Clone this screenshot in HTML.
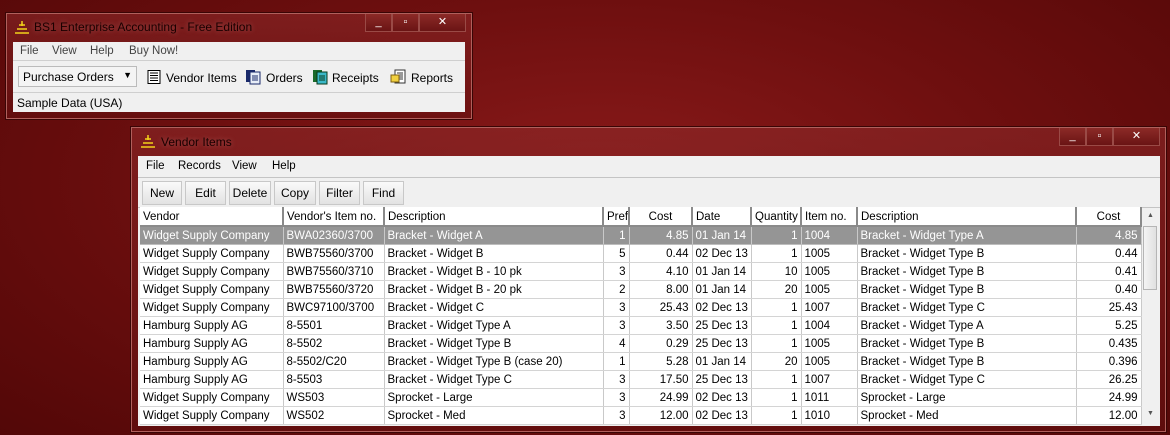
<!DOCTYPE html>
<html><head><meta charset="utf-8"><style>
*{margin:0;padding:0;box-sizing:border-box}
body{width:1170px;height:435px;overflow:hidden;position:relative;font-family:"Liberation Sans",sans-serif;font-size:11.5px;color:#000;
background:radial-gradient(ellipse 900px 400px at 600px 180px,#8a1a1a 0%,#6e0f0f 45%,#4e0606 100%);}
.win{position:absolute;border:1px solid #b0605c;background:linear-gradient(180deg,rgba(140,40,40,.6),rgba(100,15,15,.6));box-shadow:0 0 0 1px #3a0505;}
.title{position:absolute;color:#1a0000;font-size:12px;text-shadow:0 0 6px rgba(255,200,200,.35)}
.logo{position:absolute;width:16px;height:14px}
.ctl{position:absolute;top:0;height:18px;border:1px solid #9a4a46;border-top:none;background:linear-gradient(#8c2a27,#6a1414);color:#fff;font-size:11px;text-align:center;line-height:16px}
.client{position:absolute;background:#f0f0f0}
.menu span{position:absolute;top:3px}
.btn{position:absolute;top:2px;height:24px;border:1px solid #c8c8c8;background:linear-gradient(#fafafa,#e2e2e2);text-align:center;line-height:22px;font-size:12px}
table{position:absolute;border-collapse:collapse;table-layout:fixed;background:#fff}
td{height:18px;border-right:1px solid #c9c9c9;border-bottom:1px solid #d4d4d4;padding:0 3px;white-space:nowrap;overflow:hidden;font-size:11.5px;padding-top:1px}
th{height:19px;font-weight:normal;text-align:left;padding:2px 3px 0;border-right:2px solid #8a8a8a;border-bottom:2px solid #8a8a8a;background:#fff;white-space:nowrap;overflow:hidden;font-size:11.5px}
td.r,th.r{text-align:right}
tr.sel td{background:#959595;color:#fff;border-bottom-color:#bdbdbd}
</style></head><body>

<div class="win" style="left:6px;top:13px;width:466px;height:106px">
 <svg class="logo" style="left:7px;top:7px" viewBox="0 0 16 14"><path d="M7 1h2M5 4h6M8 2v3M3 8h10M1 12h14" stroke="#f2d21a" stroke-width="1.6" fill="none"/></svg>
 <div class="title" style="left:27px;top:6px">BS1 Enterprise Accounting - Free Edition</div>
 <div class="ctl" style="left:358px;width:27px">_</div>
 <div class="ctl" style="left:385px;width:27px">▫</div>
 <div class="ctl" style="left:412px;width:47px">✕</div>
 <div class="client" style="left:6px;top:28px;width:452px;height:70px">
  <div class="menu" style="position:absolute;left:0;top:0;width:452px;height:19px;border-bottom:1px solid #cfcfcf;color:#444">
   <span style="left:7px">File</span><span style="left:39px">View</span><span style="left:77px">Help</span><span style="left:116px">Buy Now!</span></div>
  <div style="position:absolute;left:5px;top:24px;width:119px;height:21px;border:1px solid #bbb;background:#f4f4f4;padding:3px 4px;font-size:12px">Purchase Orders<span style="position:absolute;right:4px;top:3px;font-size:9px">▼</span></div>
  <div style="position:absolute;left:0;top:50px;width:452px;border-top:1px solid #cfcfcf"></div>
  <svg style="position:absolute;left:134px;top:28px" width="14" height="14"><rect x="1" y="0.5" width="12" height="13" fill="#fff" stroke="#000"/><path d="M3 3h8M3 5.5h8M3 8h8M3 10.5h8" stroke="#000"/></svg>
  <span style="position:absolute;left:153px;top:29px;font-size:12px">Vendor Items</span>
  <svg style="position:absolute;left:232px;top:27px" width="16" height="16"><rect x="1" y="1" width="9" height="12" fill="#1a2a6a"/><rect x="5" y="3" width="10" height="12" fill="#e8eef8" stroke="#1a2a6a"/><path d="M7 7h6M7 9h6M7 11h6" stroke="#1a2a6a"/></svg>
  <span style="position:absolute;left:253px;top:29px;font-size:12px">Orders</span>
  <svg style="position:absolute;left:299px;top:27px" width="16" height="16"><rect x="1" y="1" width="9" height="12" fill="#1b6a2a"/><rect x="5" y="3" width="10" height="12" fill="#3bb8c8" stroke="#0a3a1a"/><path d="M7 7h6M7 9h6M7 11h6" stroke="#0a3a1a"/></svg>
  <span style="position:absolute;left:319px;top:29px;font-size:12px">Receipts</span>
  <svg style="position:absolute;left:377px;top:27px" width="17" height="16"><rect x="5" y="1" width="10" height="13" fill="#fff" stroke="#333"/><path d="M7 4h6M7 6h6M7 8h6M7 10h6" stroke="#333"/><rect x="1" y="6" width="8" height="7" fill="#f0d040" stroke="#806010"/></svg>
  <span style="position:absolute;left:398px;top:29px;font-size:12px">Reports</span>
  <span style="position:absolute;left:4px;top:54px;font-size:12px">Sample Data (USA)</span>
 </div>
</div>

<div class="win" style="left:131px;top:127px;width:1035px;height:305px">
 <svg class="logo" style="left:8px;top:7px" viewBox="0 0 16 14"><path d="M7 1h2M5 4h6M8 2v3M3 8h10M1 12h14" stroke="#f2d21a" stroke-width="1.6" fill="none"/></svg>
 <div class="title" style="left:29px;top:7px">Vendor Items</div>
 <div class="ctl" style="left:927px;width:27px">_</div>
 <div class="ctl" style="left:954px;width:27px">▫</div>
 <div class="ctl" style="left:981px;width:47px">✕</div>
 <div class="client" style="left:6px;top:28px;width:1022px;height:270px">
  <div class="menu" style="position:absolute;left:0;top:0;width:1022px;height:22px;border-bottom:1px solid #c4c4c4">
   <span style="left:8px;top:4px">File</span><span style="left:40px;top:4px">Records</span><span style="left:94px;top:4px">View</span><span style="left:134px;top:4px">Help</span></div>
  <div class="btn" style="left:4px;top:25px;width:40px">New</div>
  <div class="btn" style="left:47px;top:25px;width:41px">Edit</div>
  <div class="btn" style="left:91px;top:25px;width:42px">Delete</div>
  <div class="btn" style="left:136px;top:25px;width:42px">Copy</div>
  <div class="btn" style="left:181px;top:25px;width:41px">Filter</div>
  <div class="btn" style="left:225px;top:25px;width:41px">Find</div>
  <div style="position:absolute;left:0;top:51px;width:1022px;border-top:1px solid #c4c4c4"></div>
  <div style="position:absolute;left:1004px;top:52px;width:17px;height:217px;background:#f0f0f0">
   <div style="position:absolute;top:4px;left:5px;font-size:7px;color:#555">▲</div>
   <div style="position:absolute;top:18px;left:1px;width:14px;height:64px;border:1px solid #b5b5b5;background:linear-gradient(90deg,#f4f4f4,#e0e0e0)"></div>
   <div style="position:absolute;top:202px;left:5px;font-size:7px;color:#555">▼</div>
  </div>
 </div>
</div>

<table style="left:140px;top:207px;width:1001px">
<colgroup><col style="width:143px"><col style="width:101px"><col style="width:219px"><col style="width:26px"><col style="width:63px"><col style="width:59px"><col style="width:50px"><col style="width:56px"><col style="width:219px"><col style="width:65px"></colgroup>
<tr><th>Vendor</th><th>Vendor's Item no.</th><th>Description</th><th>Pref</th><th style="text-align:center">Cost</th><th>Date</th><th>Quantity</th><th>Item no.</th><th>Description</th><th style="text-align:center">Cost</th></tr>
<tr class="sel"><td>Widget Supply Company</td><td>BWA02360/3700</td><td>Bracket - Widget A</td><td class="r">1</td><td class="r">4.85</td><td>01 Jan 14</td><td class="r">1</td><td>1004</td><td>Bracket - Widget Type A</td><td class="r">4.85</td></tr>
<tr><td>Widget Supply Company</td><td>BWB75560/3700</td><td>Bracket - Widget B</td><td class="r">5</td><td class="r">0.44</td><td>02 Dec 13</td><td class="r">1</td><td>1005</td><td>Bracket - Widget Type B</td><td class="r">0.44</td></tr>
<tr><td>Widget Supply Company</td><td>BWB75560/3710</td><td>Bracket - Widget B - 10 pk</td><td class="r">3</td><td class="r">4.10</td><td>01 Jan 14</td><td class="r">10</td><td>1005</td><td>Bracket - Widget Type B</td><td class="r">0.41</td></tr>
<tr><td>Widget Supply Company</td><td>BWB75560/3720</td><td>Bracket - Widget B - 20 pk</td><td class="r">2</td><td class="r">8.00</td><td>01 Jan 14</td><td class="r">20</td><td>1005</td><td>Bracket - Widget Type B</td><td class="r">0.40</td></tr>
<tr><td>Widget Supply Company</td><td>BWC97100/3700</td><td>Bracket - Widget C</td><td class="r">3</td><td class="r">25.43</td><td>02 Dec 13</td><td class="r">1</td><td>1007</td><td>Bracket - Widget Type C</td><td class="r">25.43</td></tr>
<tr><td>Hamburg Supply AG</td><td>8-5501</td><td>Bracket - Widget Type A</td><td class="r">3</td><td class="r">3.50</td><td>25 Dec 13</td><td class="r">1</td><td>1004</td><td>Bracket - Widget Type A</td><td class="r">5.25</td></tr>
<tr><td>Hamburg Supply AG</td><td>8-5502</td><td>Bracket - Widget Type B</td><td class="r">4</td><td class="r">0.29</td><td>25 Dec 13</td><td class="r">1</td><td>1005</td><td>Bracket - Widget Type B</td><td class="r">0.435</td></tr>
<tr><td>Hamburg Supply AG</td><td>8-5502/C20</td><td>Bracket - Widget Type B (case 20)</td><td class="r">1</td><td class="r">5.28</td><td>01 Jan 14</td><td class="r">20</td><td>1005</td><td>Bracket - Widget Type B</td><td class="r">0.396</td></tr>
<tr><td>Hamburg Supply AG</td><td>8-5503</td><td>Bracket - Widget Type C</td><td class="r">3</td><td class="r">17.50</td><td>25 Dec 13</td><td class="r">1</td><td>1007</td><td>Bracket - Widget Type C</td><td class="r">26.25</td></tr>
<tr><td>Widget Supply Company</td><td>WS503</td><td>Sprocket - Large</td><td class="r">3</td><td class="r">24.99</td><td>02 Dec 13</td><td class="r">1</td><td>1011</td><td>Sprocket - Large</td><td class="r">24.99</td></tr>
<tr><td>Widget Supply Company</td><td>WS502</td><td>Sprocket - Med</td><td class="r">3</td><td class="r">12.00</td><td>02 Dec 13</td><td class="r">1</td><td>1010</td><td>Sprocket - Med</td><td class="r">12.00</td></tr>
</table>
</body></html>
